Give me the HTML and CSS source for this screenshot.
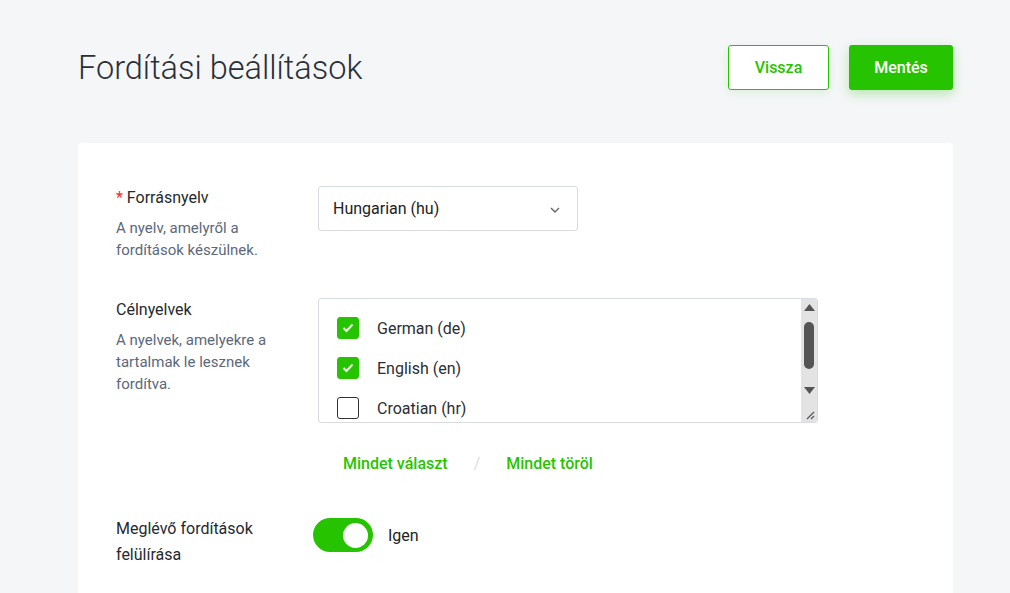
FILE: index.html
```html
<!DOCTYPE html>
<html lang="hu">
<head>
  <meta charset="UTF-8">
  <title>Fordítási beállítások</title>
  <link rel="stylesheet" href="styles.css">
</head>
<body>
  <div class="page">
    <header class="page-head">
      <h1>Fordítási beállítások</h1>
      <div class="actions">
        <button class="btn btn-outline">Vissza</button>
        <button class="btn btn-primary">Mentés</button>
      </div>
    </header>

    <section class="card">
      <div class="field">
        <div class="field-info">
          <label class="field-label"><span class="req">*</span> Forrásnyelv</label>
          <p class="field-help">A nyelv, amelyről a fordítások készülnek.</p>
        </div>
        <div class="field-control">
          <div class="select">
            <span>Hungarian (hu)</span>
            <svg class="chevron" width="10" height="6" viewBox="0 0 10 6"><path d="M1 1l4 4 4-4" fill="none" stroke="#666" stroke-width="1.4"/></svg>
          </div>
        </div>
      </div>

      <div class="field">
        <div class="field-info">
          <label class="field-label">Célnyelvek</label>
          <p class="field-help">A nyelvek, amelyekre a tartalmak le lesznek fordítva.</p>
        </div>
        <div class="field-control">
          <div class="lang-list">
            <div class="lang-items">
              <label class="lang"><span class="check on"><svg width="12" height="10" viewBox="0 0 12 10"><path d="M1.5 5l3 3 6-6.5" fill="none" stroke="#fff" stroke-width="2"/></svg></span>German (de)</label>
              <label class="lang"><span class="check on"><svg width="12" height="10" viewBox="0 0 12 10"><path d="M1.5 5l3 3 6-6.5" fill="none" stroke="#fff" stroke-width="2"/></svg></span>English (en)</label>
              <label class="lang"><span class="check"></span>Croatian (hr)</label>
            </div>
            <!-- scrollbar with arrows and resize grip -->
            <div class="scrollbar">
              <div class="sb-btn"><svg width="11" height="7" viewBox="0 0 11 7"><path d="M0 7L5.5 0 11 7z" fill="#555"/></svg></div>
              <div class="sb-track"><div class="sb-thumb"></div></div>
              <div class="sb-btn"><svg width="11" height="7" viewBox="0 0 11 7"><path d="M0 0h11L5.5 7z" fill="#555"/></svg></div>
              <div class="sb-corner"><svg width="10" height="10" viewBox="0 0 10 10"><path d="M9 2L2 9M9 6L6 9" stroke="#555" stroke-width="1.2"/></svg></div>
            </div>
          </div>
          <div class="list-links">
            <a href="#">Mindet választ</a>
            <span class="sep">/</span>
            <a href="#">Mindet töröl</a>
          </div>
        </div>
      </div>

      <div class="field">
        <div class="field-info">
          <label class="field-label tall">Meglévő fordítások felülírása</label>
        </div>
        <div class="field-control toggle-row">
          <span class="toggle on"><span class="knob"></span></span>
          <span class="toggle-text">Igen</span>
        </div>
      </div>
    </section>
  </div>
</body>
</html>
```

FILE: styles.css
```css
html, body {
  margin: 0;
  background: #f5f6f8;
  font-family: Roboto, "Open Sans", Arial, sans-serif;
  color: #222;
}
.page {
  padding: 36px 57px 0 78px;
}
.page-head {
  display: flex;
  justify-content: space-between;
  align-items: center;
  height: 63px;
  margin-bottom: 44px;
}
.page-head h1 {
  margin: 0;
  font-size: 32.5px;
  font-weight: 300;
  color: #2b2f36;
}
.actions {
  display: flex;
  gap: 20px;
}
.btn {
  height: 45px;
  padding: 0 20px;
  border-radius: 3px;
  font-family: inherit;
  font-size: 16px;
  font-weight: 500;
  cursor: pointer;
}
.btn-outline {
  width: 101px;
  background: #fff;
  color: #26c400;
  border: 1px solid #26c400;
  box-shadow: 0 3px 10px rgba(38, 196, 0, 0.12);
}
.btn-primary {
  width: 104px;
  background: #26c400;
  color: #fff;
  border: none;
  box-shadow: 0 4px 12px rgba(38, 196, 0, 0.3);
}
.card {
  background: #fff;
  border-radius: 4px;
  padding: 43px 38px 40px;
  min-height: 500px;
}
.field {
  display: flex;
  margin-bottom: 37px;
}
.field-info {
  width: 202px;
  flex-shrink: 0;
}
.field-label {
  display: block;
  font-size: 16px;
  line-height: 24px;
  color: #26292e;
}
.field-label.tall {
  line-height: 26px;
  margin-top: 1px;
}
.req {
  color: #e8332c;
}
.field-help {
  margin: 7px 0 0;
  font-size: 15px;
  line-height: 22px;
  color: #5b687b;
  padding-right: 30px;
}
.select {
  width: 260px;
  height: 45px;
  box-sizing: border-box;
  border: 1px solid #d8dbdf;
  border-radius: 3px;
  display: flex;
  align-items: center;
  justify-content: space-between;
  padding: 0 17px 0 14px;
  font-size: 16px;
  color: #222;
}
.chevron {
  margin-top: 2px;
}
.lang-list {
  width: 500px;
  height: 125px;
  box-sizing: border-box;
  border: 1px solid #d8dbdf;
  border-radius: 3px;
  display: flex;
  overflow: hidden;
}
.lang-items {
  flex: 1;
  overflow: hidden;
  padding: 9px 0 0 18px;
}
.lang {
  display: flex;
  align-items: center;
  height: 40px;
  font-size: 16px;
  color: #2a2e35;
}
.check {
  width: 22px;
  height: 22px;
  box-sizing: border-box;
  border: 1.5px solid #333;
  border-radius: 3px;
  margin-right: 18px;
  display: flex;
  align-items: center;
  justify-content: center;
}
.check.on {
  background: #26c400;
  border-color: #26c400;
}
.scrollbar {
  width: 16px;
  background: #e3e3e3;
  display: flex;
  flex-direction: column;
}
.sb-btn {
  height: 16px;
  display: flex;
  align-items: center;
  justify-content: center;
}
.sb-track {
  flex: 1;
  display: flex;
  justify-content: center;
}
.sb-thumb {
  width: 10px;
  height: 47px;
  margin-top: 7px;
  border-radius: 5px;
  background: #555;
}
.sb-corner {
  height: 24px;
  display: flex;
  align-items: flex-end;
  justify-content: flex-end;
  padding: 0 2px 2px 0;
  box-sizing: border-box;
}
.list-links {
  display: flex;
  align-items: center;
  height: 24px;
  padding: 28px 0 0 25px;
  font-size: 16px;
  font-weight: 500;
}
.list-links a {
  color: #26c400;
  text-decoration: none;
}
.sep {
  color: #ddd;
  margin: 0 26px;
  font-weight: 400;
}
.field:nth-child(2) {
  margin-bottom: 40px;
}
.toggle-row {
  display: flex;
  align-items: center;
  height: 40px;
  margin-left: -5px;
}
.toggle {
  width: 60px;
  height: 34px;
  border-radius: 17px;
  background: #26c400;
  display: flex;
  align-items: center;
  justify-content: flex-end;
  padding: 0 5px;
  box-sizing: border-box;
}
.knob {
  width: 25px;
  height: 25px;
  border-radius: 50%;
  background: #fff;
}
.toggle-text {
  margin-left: 15px;
  font-size: 16px;
}
```
